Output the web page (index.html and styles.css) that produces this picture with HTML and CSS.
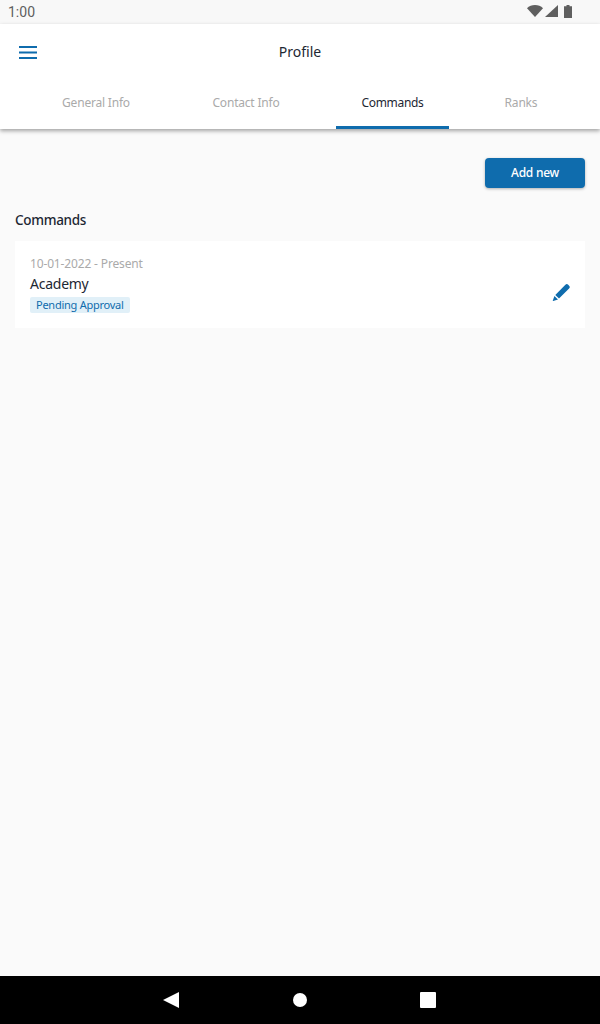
FILE: index.html
```html
<!DOCTYPE html>
<html lang="en">
<head>
  <meta charset="UTF-8" />
  <meta name="viewport" content="width=device-width, initial-scale=1" />
  <title>Profile</title>
  <link rel="stylesheet" href="styles.css">
</head>
<body>
  <div class="status-bar">
    <span class="clock">1:00</span>
    <div class="status-icons">
      <svg width="16" height="12" viewBox="0 0 16 12"><path d="M0 3.2C2 1.2 5 0 8 0s6 1.200 8 3.200L8 12z" fill="#5f5f5f"/></svg>
      <svg width="13" height="12" viewBox="0 0 13 12"><path d="M0 12L13 0v12z" fill="#5f5f5f"/></svg>
      <svg class="battery" width="8" height="13" viewBox="0 0 8 13"><path d="M2.500 0h3v1.300H8V13H0V1.300h2.500z" fill="#5f5f5f"/></svg>
    </div>
  </div>

  <header class="app-header">
    <div class="toolbar">
      <svg class="menu-icon" width="18" height="13" viewBox="0 0 18 13"><path d="M0 0h18v2H0zM0 5.500h18v2H0zM0 11h18v2H0z" fill="#0f6cad"/></svg>
      <span class="page-title">Profile</span>
    </div>
    <nav class="tabs">
      <div class="tab tab-general">General Info</div>
      <div class="tab tab-contact">Contact Info</div>
      <div class="tab tab-commands active">Commands</div>
      <div class="tab tab-ranks">Ranks</div>
    </nav>
  </header>

  <main class="content">
    <div class="actions">
      <button class="add-btn">Add new</button>
    </div>
    <h2 class="section-title">Commands</h2>
    <div class="card">
      <div class="card-info">
        <div class="dates">10-01-2022 - Present</div>
        <div class="command-name">Academy</div>
        <span class="badge">Pending Approval</span>
      </div>
      <svg class="edit-icon" width="18" height="18" viewBox="3 3 18 18"><path d="M6.300 14.900L16.400 4.800a2 2 0 0 1 2.800 0l.9.9a2 2 0 0 1 0 2.800L10 18.600zM5.400 15.900L9 19.500l-5.400 1.700z" fill="#0f6cad"/></svg>
    </div>
  </main>

  <div class="nav-bar">
    <svg width="16" height="16" viewBox="0 0 16 16"><path d="M16 0v16L0 8z" fill="#fff"/></svg>
    <svg width="14" height="14" viewBox="0 0 14 14"><circle cx="7" cy="7" r="7" fill="#fff"/></svg>
    <svg class="nav-square" width="16" height="16" viewBox="0 0 16 16"><rect width="16" height="16" rx="1" fill="#fff"/></svg>
  </div>
</body>
</html>
```

FILE: styles.css
```css
* {
  box-sizing: border-box;
}
html, body {
  height: 100%;
}
body {
  margin: 0;
  height: 1024px;
  display: flex;
  flex-direction: column;
  font-family: "Noto Sans", "Open Sans", sans-serif;
  background: #fafafa;
  color: #1d2733;
  overflow: hidden;
}
.status-bar {
  height: 24px;
  display: flex;
  justify-content: space-between;
  align-items: center;
  padding: 0 28px 0 8px;
  background: #f8f8f8;
}
.clock {
  font-family: Roboto, sans-serif;
  font-size: 14px;
  color: #5f5f5f;
}
.status-icons {
  display: flex;
  align-items: center;
  gap: 2px;
  margin-top: -2px;
}
.battery {
  margin-left: 4px;
}
.app-header {
  height: 105px;
  background: #fff;
  box-shadow: 0 2px 4px rgba(0, 0, 0, 0.35);
  z-index: 1;
}
.toolbar {
  height: 56px;
  position: relative;
  display: flex;
  align-items: center;
  justify-content: center;
  padding-bottom: 2px;
}
.menu-icon {
  position: absolute;
  left: 19px;
  top: 22px;
}
.page-title {
  font-size: 14px;
}
.tabs {
  height: 49px;
  display: flex;
  padding-left: 21px;
}
.tab {
  height: 49px;
  padding-top: 14px;
  text-align: center;
  font-size: 12px;
  letter-spacing: -0.2px;
  color: #aaaaaa;
}
.tab-general {
  width: 150px;
}
.tab-contact {
  width: 150px;
}
.tab-commands {
  width: 113px;
  margin-left: 15px;
}
.tab-ranks {
  width: 84px;
  margin-left: 30px;
}
.tab.active {
  color: #1d2733;
  letter-spacing: -0.3px;
  border-bottom: 3px solid #0f6cad;
}
.content {
  flex: 1;
  padding: 29px 15px 0;
}
.actions {
  display: flex;
  justify-content: flex-end;
}
.add-btn {
  width: 100px;
  height: 30px;
  padding: 0 0 2px;
  border: 0;
  border-radius: 4px;
  background: #0f6cad;
  color: #fff;
  font-family: inherit;
  font-size: 12px;
  font-weight: 500;
  letter-spacing: -0.25px;
  box-shadow: 0 1px 3px rgba(0, 0, 0, 0.3);
}
.section-title {
  margin: 22px 0 11px;
  font-size: 13.5px;
  line-height: 20px;
  font-weight: 500;
  letter-spacing: -0.3px;
}
.card {
  height: 87px;
  display: flex;
  justify-content: space-between;
  align-items: center;
  padding: 0 15px;
  background: #fff;
}
.card-info {
  margin-bottom: 1px;
}
.dates {
  font-size: 12px;
  line-height: 16px;
  letter-spacing: -0.15px;
  color: #aaaaaa;
}
.command-name {
  margin-top: 2px;
  font-size: 14px;
  line-height: 20px;
  letter-spacing: -0.25px;
}
.badge {
  display: block;
  width: 100px;
  margin-top: 3px;
  padding: 0 6px;
  font-size: 11px;
  line-height: 16px;
  letter-spacing: -0.25px;
  white-space: nowrap;
  color: #0f6cad;
  background: #e1f0f8;
  border-radius: 2px;
}
.edit-icon {
  margin-top: 15px;
}
.nav-bar {
  height: 48px;
  background: #000;
  display: flex;
  align-items: center;
  justify-content: center;
  gap: 114px;
  padding-right: 1px;
}
.nav-square {
  margin-left: -1px;
}
```
